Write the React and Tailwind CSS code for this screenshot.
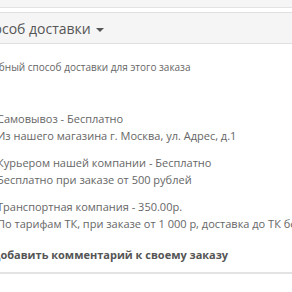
const options = [
  { title: 'Самовывоз - Бесплатно', note: 'Из нашего магазина г. Москва, ул. Адрес, д.1' },
  { title: 'Курьером нашей компании - Бесплатно', note: 'Бесплатно при заказе от 500 рублей' },
  { title: 'Транспортная компания - 350.00р.', note: 'По тарифам ТК, при заказе от 1 000 р, доставка до ТК бесплатно' },
]

const App = () => {
  return (
    <div className="w-[292px] h-[292px] overflow-hidden bg-white font-['Open_Sans',sans-serif] text-[#555]">
      <div className="h-[8px] bg-[#f5f5f5] border-b border-[#e3e3e3]" />
      <div className="h-[4px]" />
      <div className="h-[32px] bg-[#f5f5f5] border-y border-[#e0e0e0] flex items-center whitespace-nowrap">
        <h3 className="ml-[-24px] text-[14px] text-[#555]">
          Способ доставки
          <span className="inline-block ml-[5px] align-middle w-0 h-0 border-x-[4px] border-x-transparent border-t-[4px] border-t-[#555]" />
        </h3>
      </div>
      <div className="whitespace-nowrap text-[11px] leading-[16px] text-[#666]">
        <p className="ml-[-69px] mt-[15px] text-[10px]">Выберите удобный способ доставки для этого заказа</p>
        <div className="mt-[36px] flex flex-col gap-[11px]">
          {options.map((o) => (
            <label key={o.title} className="ml-[-22px] flex items-start gap-[6px]">
              <input type="radio" name="ship" className="mt-[2px] w-[13px] h-[13px]" />
              <span className="flex flex-col gap-[1px]">
                <span>{o.title}</span>
                <span>{o.note}</span>
              </span>
            </label>
          ))}
        </div>
        <p className="ml-[-8px] mt-[15px] font-bold text-[#555]">Добавить комментарий к своему заказу</p>
        <div className="mt-[9px] border-b-2 border-[#e3e3e3]" />
      </div>
    </div>
  )
}

export default App
